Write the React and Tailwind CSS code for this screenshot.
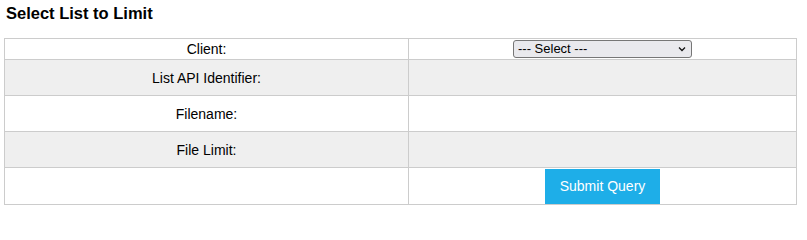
import React from 'react'

const rows = [
  { label: 'Client:', kind: 'select' },
  { label: 'List API Identifier:', kind: 'gray' },
  { label: 'Filename:', kind: 'white' },
  { label: 'File Limit:', kind: 'gray' },
]

const App = () => {
  return (
    <div className="w-[807px] h-[215px] bg-white text-black font-['Liberation_Sans',Arial,sans-serif]">
      <h3 className="pl-[6px] pt-[4px] text-[16.5px] leading-[18px] font-bold">Select List to Limit</h3>

      <table className="mt-[16px] ml-[4px] w-[793px] border-collapse text-[14px] leading-[18px]">
        <tbody>
          {rows.map((r) => (
            <tr key={r.label} className={r.kind === 'gray' ? 'bg-[#efefef]' : 'bg-white'}>
              <td className={`w-[404px] border border-[#cccccc] p-0 text-center ${r.kind === 'select' ? 'h-[21px]' : 'h-[36px]'}`}>
                {r.label}
              </td>
              <td className="border border-[#cccccc] p-0 text-center">
                {r.kind === 'select' && (
                  <div className="relative mx-auto w-[179px]">
                    <select className="block h-[18px] w-[179px] appearance-none rounded-[3px] border border-[#767676] bg-[#e9e9ed] pl-[4px] text-left text-[13px] leading-[16px]">
                      <option>--- Select ---</option>
                    </select>
                    <svg className="pointer-events-none absolute right-[6px] top-[6px]" width="8" height="6" viewBox="0 0 8 6">
                      <path d="M1 1.5 L4 4.5 L7 1.5" fill="none" stroke="#111" strokeWidth="1.3" />
                    </svg>
                  </div>
                )}
              </td>
            </tr>
          ))}
          <tr>
            <td className="h-[37px] border border-[#cccccc] p-0"></td>
            <td className="border border-[#cccccc] p-0 text-center">
              <button className="block mx-auto h-[35px] w-[115px] bg-[#1eaee8] text-[14px] text-white">Submit Query</button>
            </td>
          </tr>
        </tbody>
      </table>
    </div>
  )
}

export default App
